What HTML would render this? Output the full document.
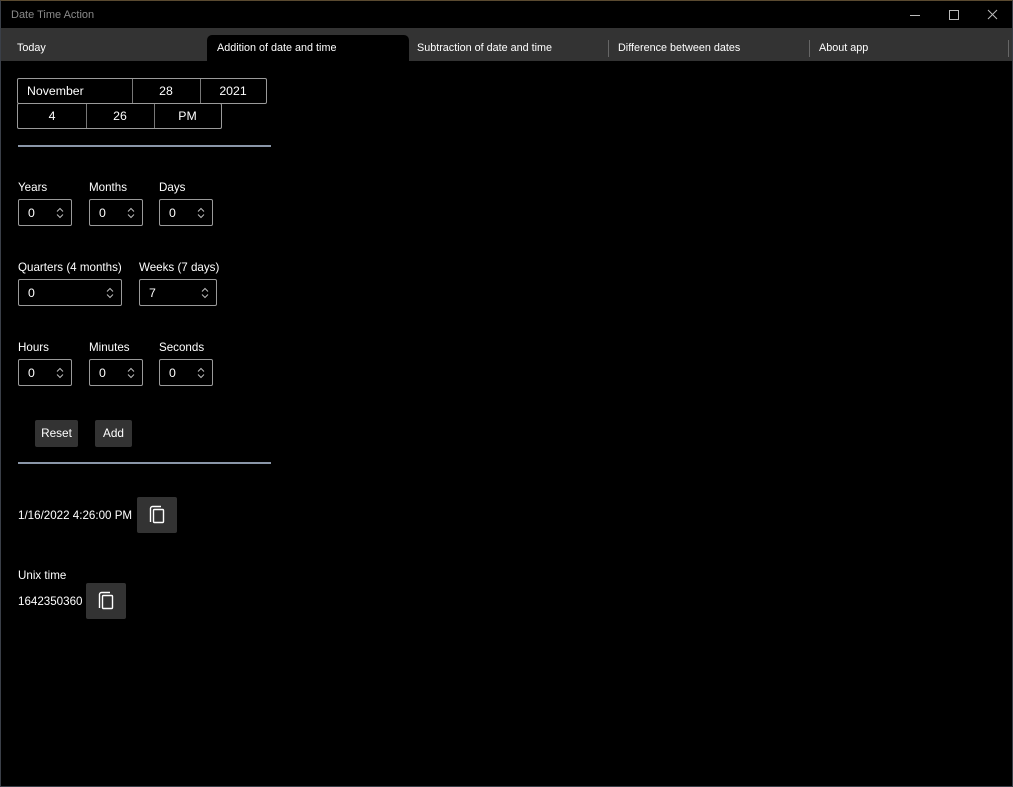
<!DOCTYPE html>
<html><head><meta charset="utf-8"><style>
*{margin:0;padding:0;box-sizing:border-box}
body{width:1013px;height:787px;background:#000;position:relative;overflow:hidden;font-family:"Liberation Sans",sans-serif;color:#fff;font-size:12px}
.a{position:absolute}
.frame{position:absolute;left:0;top:0;width:1013px;height:787px;border:1px solid #3a3f48;border-top-color:#5a4a30;pointer-events:none}
.title{left:11px;top:9px;color:#8a8a8a;font-size:11px}
.tabs{left:1px;top:28px;width:1011px;height:33px;background:#333}
.tab{position:absolute;top:42px;font-size:10.8px;color:#fff}
.sep{position:absolute;top:40px;width:1px;height:17px;background:#666}
.box{position:absolute;border:1px solid #9a9a9a;border-radius:2px;height:26px}
.cell{position:absolute;top:0;height:24px;line-height:24px;font-size:12.3px;text-align:center}
.vl{position:absolute;top:0;width:1px;height:24px;background:#777}
.lab{position:absolute;font-size:11.6px}
.spin{position:absolute;border:1px solid #9a9a9a;border-radius:2px;height:27px;width:54px}
.spin span{position:absolute;left:9px;top:6px;font-size:12.3px}
.spin svg{position:absolute;right:7px;top:7px}
.btn{position:absolute;background:#333;border-radius:2px;height:27px;line-height:27px;text-align:center;font-size:11.8px}
.hr{position:absolute;left:18px;width:253px;height:2px;background:#8a96a8}
.cp{position:absolute;background:#333;border-radius:2px;width:40px;height:36px}
</style></head><body>
<div class="a title">Date Time Action</div>
<svg class="a" style="left:905px;top:8px" width="100" height="14"><path d="M5 7.5h10" stroke="#bbb" stroke-width="1"/><rect x="44.5" y="2.5" width="9" height="9" fill="none" stroke="#bbb"/><path d="M83 2l9 9M92 2l-9 9" stroke="#bbb"/></svg>
<div class="a tabs"></div>
<div class="a" style="left:207px;top:35px;width:202px;height:27px;background:#000;border-radius:5px 5px 0 0"></div>
<div class="tab" style="left:17px">Today</div>
<div class="tab" style="left:217px">Addition of date and time</div>
<div class="tab" style="left:417px">Subtraction of date and time</div>
<div class="tab" style="left:618px">Difference between dates</div>
<div class="tab" style="left:819px">About app</div>
<div class="sep" style="left:608px"></div><div class="sep" style="left:809px"></div><div class="sep" style="left:1008px"></div>

<div class="box" style="left:17px;top:78px;width:250px">
 <div class="cell" style="left:9px;text-align:left">November</div>
 <div class="vl" style="left:114px"></div>
 <div class="cell" style="left:114px;width:68px">28</div>
 <div class="vl" style="left:182px"></div>
 <div class="cell" style="left:182px;width:66px">2021</div>
</div>
<div class="box" style="left:17px;top:103px;width:205px">
 <div class="cell" style="left:0;width:68px">4</div>
 <div class="vl" style="left:68px"></div>
 <div class="cell" style="left:68px;width:68px">26</div>
 <div class="vl" style="left:136px"></div>
 <div class="cell" style="left:136px;width:67px">PM</div>
</div>
<div class="hr" style="top:145px"></div>

<div class="lab" style="left:18px;top:181px">Years</div>
<div class="lab" style="left:89px;top:181px">Months</div>
<div class="lab" style="left:159px;top:181px">Days</div>
<div class="spin" style="left:18px;top:199px"><span>0</span><svg width="8" height="12"><path d="M1 4.5l3-3 3 3M1 7.5l3 3 3-3" fill="none" stroke="#bbb"/></svg></div>
<div class="spin" style="left:89px;top:199px"><span>0</span><svg width="8" height="12"><path d="M1 4.5l3-3 3 3M1 7.5l3 3 3-3" fill="none" stroke="#bbb"/></svg></div>
<div class="spin" style="left:159px;top:199px"><span>0</span><svg width="8" height="12"><path d="M1 4.5l3-3 3 3M1 7.5l3 3 3-3" fill="none" stroke="#bbb"/></svg></div>

<div class="lab" style="left:18px;top:261px">Quarters (4 months)</div>
<div class="lab" style="left:139px;top:261px">Weeks (7 days)</div>
<div class="spin" style="left:18px;top:279px;width:104px"><span>0</span><svg width="8" height="12"><path d="M1 4.5l3-3 3 3M1 7.5l3 3 3-3" fill="none" stroke="#bbb"/></svg></div>
<div class="spin" style="left:139px;top:279px;width:78px"><span>7</span><svg width="8" height="12"><path d="M1 4.5l3-3 3 3M1 7.5l3 3 3-3" fill="none" stroke="#bbb"/></svg></div>

<div class="lab" style="left:18px;top:341px">Hours</div>
<div class="lab" style="left:89px;top:341px">Minutes</div>
<div class="lab" style="left:159px;top:341px">Seconds</div>
<div class="spin" style="left:18px;top:359px"><span>0</span><svg width="8" height="12"><path d="M1 4.5l3-3 3 3M1 7.5l3 3 3-3" fill="none" stroke="#bbb"/></svg></div>
<div class="spin" style="left:89px;top:359px"><span>0</span><svg width="8" height="12"><path d="M1 4.5l3-3 3 3M1 7.5l3 3 3-3" fill="none" stroke="#bbb"/></svg></div>
<div class="spin" style="left:159px;top:359px"><span>0</span><svg width="8" height="12"><path d="M1 4.5l3-3 3 3M1 7.5l3 3 3-3" fill="none" stroke="#bbb"/></svg></div>

<div class="btn" style="left:35px;top:420px;width:43px">Reset</div>
<div class="btn" style="left:95px;top:420px;width:37px">Add</div>
<div class="hr" style="top:462px"></div>

<div class="lab" style="left:18px;top:509px">1/16/2022 4:26:00 PM</div>
<div class="cp" style="left:137px;top:497px"><svg width="40" height="36"><path d="M13.5 25V11.5a2 2 0 0 1 2-2H24" fill="none" stroke="#fff" stroke-width="1.4"/><rect x="16.5" y="12.5" width="10" height="13" rx="1" fill="none" stroke="#fff" stroke-width="1.4"/></svg></div>
<div class="lab" style="left:18px;top:569px">Unix time</div>
<div class="lab" style="left:18px;top:595px">1642350360</div>
<div class="cp" style="left:86px;top:583px"><svg width="40" height="36"><path d="M13.5 25V11.5a2 2 0 0 1 2-2H24" fill="none" stroke="#fff" stroke-width="1.4"/><rect x="16.5" y="12.5" width="10" height="13" rx="1" fill="none" stroke="#fff" stroke-width="1.4"/></svg></div>
<div class="frame"></div>
</body></html>
